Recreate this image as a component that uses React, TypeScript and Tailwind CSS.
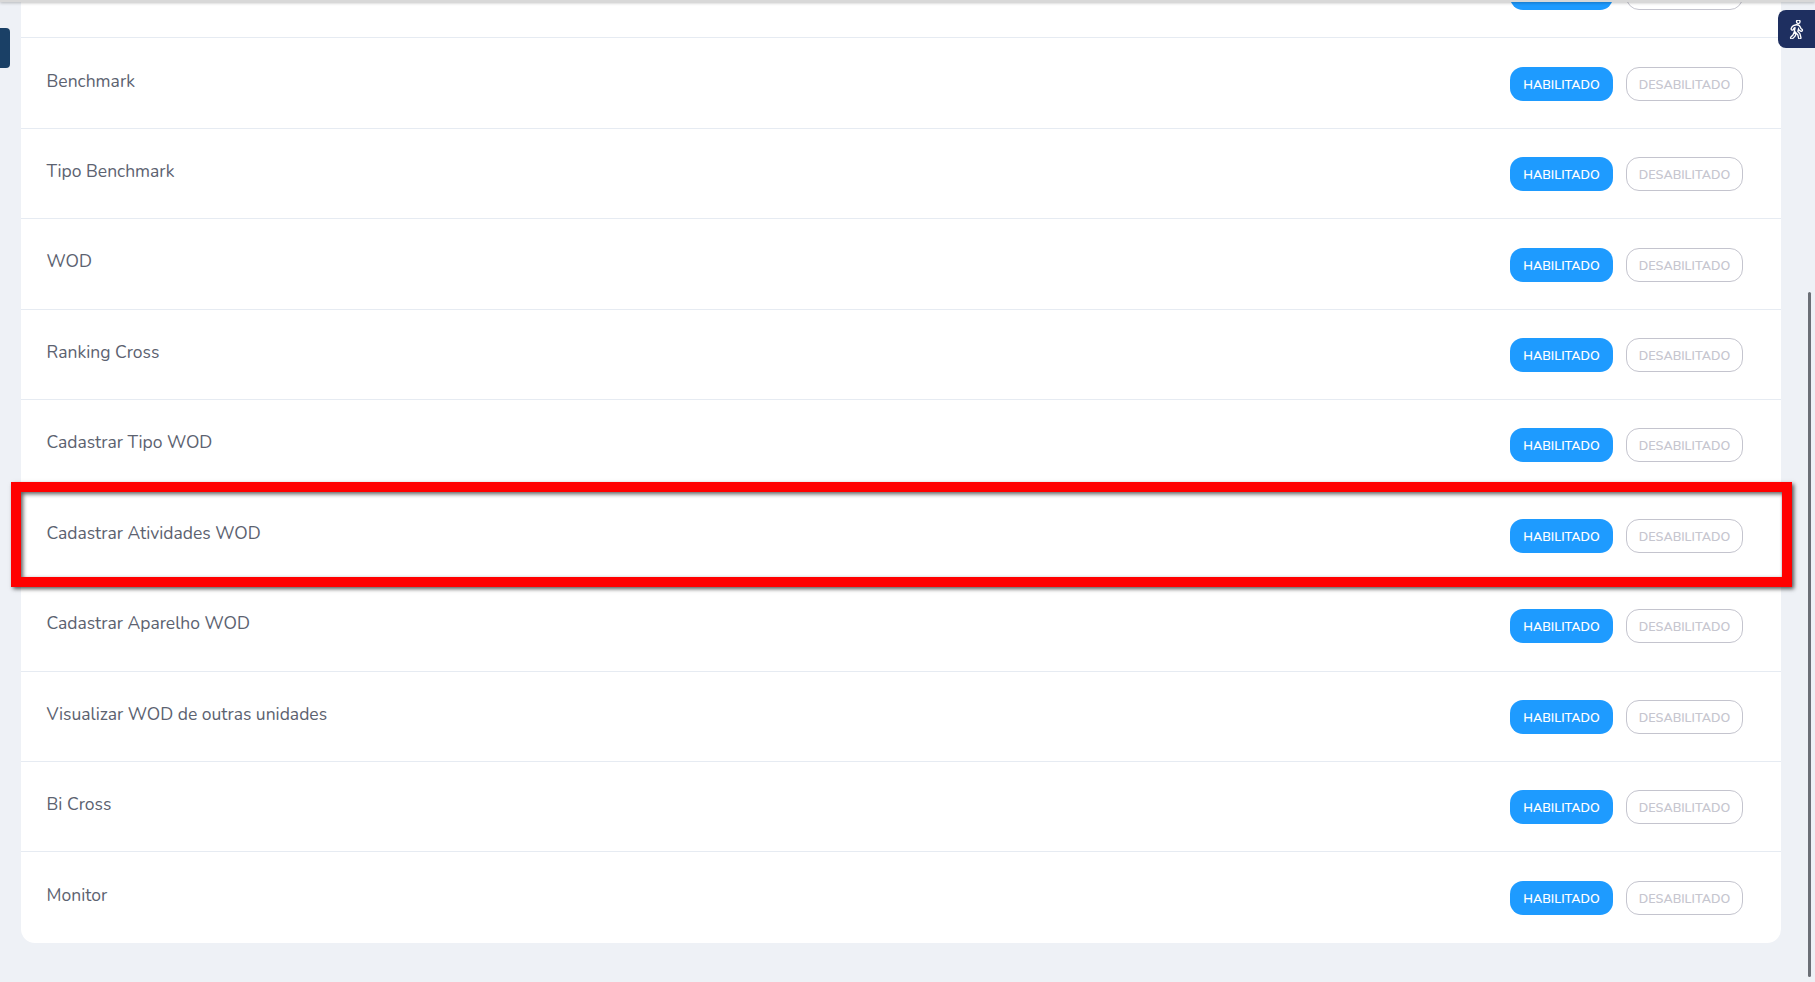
import { FaPersonWalking } from "react-icons/fa6";

const ROWS = [
  "",
  "Benchmark",
  "Tipo Benchmark",
  "WOD",
  "Ranking Cross",
  "Cadastrar Tipo WOD",
  "Cadastrar Atividades WOD",
  "Cadastrar Aparelho WOD",
  "Visualizar WOD de outras unidades",
  "Bi Cross",
  "Monitor",
];

function Row({ label, last }: { label: string; last: boolean }) {
  return (
    <div
      className={`flex h-[90.45px] items-center justify-between pl-[25.5px] pr-[38px] ${
        last ? "" : "border-b border-[#e6ebf2]"
      }`}
    >
      <span className="-mt-[5px] text-[17.5px] text-[#5c6270]">{label}</span>
      <div className="mt-[1px] flex items-center gap-[13px] text-[12.6px] font-semibold">
        <button className="h-[34px] w-[103px] rounded-[13px] bg-[#1e9bff] pt-[3px] text-white">
          HABILITADO
        </button>
        <button className="h-[34px] w-[117px] rounded-[13px] border border-[#c4c4ce] bg-white pt-[3px] text-[#c6c6cf]">
          DESABILITADO
        </button>
      </div>
    </div>
  );
}

export default function App() {
  return (
    <div className="relative h-[982px] overflow-hidden bg-[#eef1f6] font-['Nunito','Lato','Noto_Sans',sans-serif]">
      <div className="ml-[21px] mt-[-52px] w-[1760px] rounded-b-[14px] bg-white">
        {ROWS.map((label, i) => (
          <Row key={i} label={label} last={i === ROWS.length - 1} />
        ))}
      </div>

      {/* sombra do header fixo */}
      <div className="absolute inset-x-0 top-0 h-[2px] bg-[#d8d8d8] shadow-[0_1px_3px_rgba(0,0,0,0.3)]" />

      <div className="absolute left-0 top-[28px] h-[40px] w-[10px] rounded-r-[4px] bg-[#1a4066]" />
      <div className="absolute right-0 top-[10px] flex h-[38px] w-[37px] items-center justify-center rounded-l-[8px] bg-[#1e2f60]">
        <FaPersonWalking className="h-[19px] w-[19px] fill-[#1e2f60] stroke-white stroke-[36px]" />
      </div>

      {/* scrollbar */}
      <div className="absolute left-[1808px] top-[292px] h-[685px] w-[3px] rounded-full bg-[#6b6f76]" />

      {/* destaque vermelho */}
      <div className="absolute left-[11px] top-[482px] h-[105px] w-[1781px] border-[10px] border-[#ff0000] shadow-[2px_2px_4px_rgba(0,0,0,0.65),inset_2px_2px_4px_rgba(0,0,0,0.65)]" />
    </div>
  );
}
